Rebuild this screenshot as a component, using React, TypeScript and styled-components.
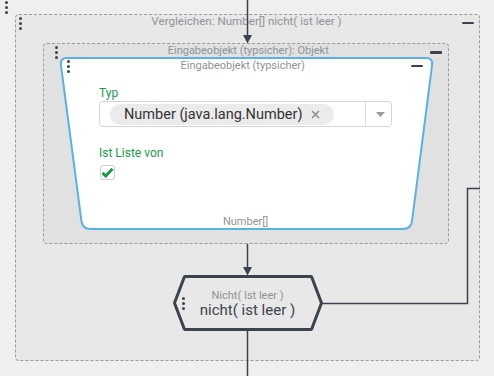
import React from "react";
import styled, { createGlobalStyle } from "styled-components";

const GlobalStyle = createGlobalStyle`
  html, body { margin: 0; padding: 0; background: #efefef; }
  body { font-family: Roboto, "Liberation Sans", Arial, sans-serif; }
  * { box-sizing: border-box; }
`;

const DARK = "#3b444d";
const GREEN = "#1b9a4b";
const MUTED = "#8f9397";

const Page = styled.div`
  position: relative;
  width: 494px;
  height: 376px;
  overflow: hidden;
  padding: 14px 0 0 15px;
`;

const TopHandle = styled.div`
  position: absolute;
  left: 4.5px;
  top: 0.5px;
`;

const DotsWrap = styled.div`
  display: flex;
  flex-direction: column;
  gap: 2px;
`;

const Dot = styled.span`
  width: 3px;
  height: 3px;
  border-radius: 50%;
  background: ${DARK};
`;

const Dots = () => (
  <DotsWrap>
    <Dot />
    <Dot />
    <Dot />
  </DotsWrap>
);

const Minus = styled.span<{ $top: number }>`
  display: block;
  width: 12.5px;
  height: 2.5px;
  border-radius: 1px;
  background: ${DARK};
  margin-top: ${(p) => p.$top}px;
`;

const Header = styled.div<{ $h: number; $pl: number; $pr: number }>`
  display: grid;
  grid-template-columns: 1fr auto 1fr;
  height: ${(p) => p.$h}px;
  padding: 0 ${(p) => p.$pr}px 0 ${(p) => p.$pl}px;
  align-items: start;
  flex: none;
  & > :first-child { justify-self: start; }
  & > :last-child { justify-self: end; }
`;

const HandleSlot = styled.div<{ $top: number }>`
  margin-top: ${(p) => p.$top}px;
`;

const Title = styled.div<{ $size?: number; $shift?: number }>`
  font-size: ${(p) => p.$size ?? 11}px;
  line-height: 13px;
  color: ${MUTED};
  white-space: nowrap;
  text-align: center;
  margin-left: ${(p) => p.$shift ?? 0}px;
`;

const Outer = styled.div`
  width: 465px;
  height: 347px;
  border: 1px dashed #9b9b9b;
  border-radius: 4px;
  background: #e8e8e8;
  display: flex;
  flex-direction: column;
`;

const Inner = styled.div`
  width: 406px;
  height: 201px;
  margin: 12px 0 0 27px;
  border: 1px dashed #9b9b9b;
  border-radius: 4px;
  background: #e1e1e1;
  display: flex;
  flex-direction: column;
`;

const Card = styled.div`
  position: relative;
  width: 375px;
  height: 173px;
  margin-left: 15px;
  padding: 2px;
  display: flex;
  flex-direction: column;
`;

const ShapeSvg = styled.svg`
  position: absolute;
  left: 0;
  top: 0;
  z-index: 0;
`;

const Layer = styled.div`
  position: relative;
  z-index: 1;
`;

const Body = styled(Layer)`
  display: flex;
  flex-direction: column;
  align-items: flex-start;
  padding: 14px 0 0 38px;
`;

const Label = styled.div<{ $mt: number }>`
  font-size: 12px;
  line-height: 14px;
  color: ${GREEN};
  margin-top: ${(p) => p.$mt}px;
`;

const Select = styled.div`
  width: 293px;
  height: 26px;
  margin-top: 1px;
  border: 1px solid #d4d4d4;
  border-radius: 4px;
  display: flex;
  align-items: center;
  background: #fff;
`;

const ChipArea = styled.div`
  flex: 1;
  padding-left: 10px;
  display: flex;
  align-items: center;
`;

const Chip = styled.div`
  height: 21px;
  border-radius: 11px;
  background: #ebebeb;
  display: flex;
  align-items: center;
  gap: 9px;
  padding: 0 14px 0 14px;
  font-size: 14.5px;
  color: #333;
  white-space: nowrap;
`;

const CaretBox = styled.div`
  width: 26px;
  height: 24px;
  border-left: 1px solid #dcdcdc;
  display: flex;
  align-items: center;
  justify-content: center;
  padding-left: 4px;
`;

const Checkbox = styled.div`
  width: 15px;
  height: 15px;
  margin: 5px 0 0 1px;
  border: 1px solid #cfcfcf;
  border-radius: 3px;
  background: #fff;
  display: flex;
  align-items: center;
  justify-content: center;
`;

const Footer = styled(Layer)`
  margin-top: auto;
  padding: 0 0 0 0;
  text-align: center;
  font-size: 11px;
  line-height: 13px;
  color: ${MUTED};
  margin-right: 2px;
`;

const Hex = styled.div`
  position: relative;
  align-self: center;
  width: 150px;
  height: 56px;
  margin-top: 31px;
  display: flex;
  align-items: center;
  justify-content: center;
`;

const HexHandle = styled(Layer)`
  position: absolute;
  left: 9.5px;
  top: 21.5px;
`;

const HexText = styled(Layer)`
  display: flex;
  flex-direction: column;
  align-items: center;
  margin-top: 1px;
`;

const HexSmall = styled.div`
  font-size: 11px;
  line-height: 13px;
  color: ${MUTED};
  white-space: nowrap;
`;

const HexBig = styled.div`
  font-size: 15px;
  line-height: 17px;
  color: ${DARK};
  white-space: nowrap;
`;

const Wires = styled.svg`
  position: absolute;
  left: 0;
  top: 0;
  pointer-events: none;
`;

type Pt = [number, number];

function roundedPath(pts: Pt[], radii: number[]): string {
  const n = pts.length;
  let d = "";
  for (let i = 0; i < n; i++) {
    const prev = pts[(i - 1 + n) % n];
    const cur = pts[i];
    const next = pts[(i + 1) % n];
    const r = radii[i];
    const v1 = [prev[0] - cur[0], prev[1] - cur[1]];
    const v2 = [next[0] - cur[0], next[1] - cur[1]];
    const l1 = Math.hypot(v1[0], v1[1]);
    const l2 = Math.hypot(v2[0], v2[1]);
    const a: Pt = [cur[0] + (v1[0] / l1) * r, cur[1] + (v1[1] / l1) * r];
    const b: Pt = [cur[0] + (v2[0] / l2) * r, cur[1] + (v2[1] / l2) * r];
    d += `${i === 0 ? "M" : "L"}${a[0].toFixed(2)},${a[1].toFixed(2)} Q${cur[0]},${cur[1]} ${b[0].toFixed(2)},${b[1].toFixed(2)} `;
  }
  return d + "Z";
}

const cardPath = roundedPath(
  [
    [1, 1],
    [374, 1],
    [352, 172],
    [23.5, 172],
  ],
  [7, 7, 8, 8]
);

const hexPath = roundedPath(
  [
    [1.5, 28],
    [11.5, 1.5],
    [138.5, 1.5],
    [148.5, 28],
    [138.5, 54.5],
    [11.5, 54.5],
  ],
  [0.5, 0.5, 0.5, 0.5, 0.5, 0.5]
);

export default function App() {
  return (
    <>
      <GlobalStyle />
      <Page>
        <TopHandle>
          <Dots />
        </TopHandle>
        <Outer>
          <Header $h={16} $pl={3} $pr={5}>
            <HandleSlot $top={1.5}>
              <Dots />
            </HandleSlot>
            <Title $size={11.6}>Vergleichen: Number[] nicht( ist leer )</Title>
            <Minus $top={6.8} />
          </Header>
          <Inner>
            <Header $h={13} $pl={10.5} $pr={6}>
              <HandleSlot $top={1.5}>
                <Dots />
              </HandleSlot>
              <Title>Eingabeobjekt (typsicher): Objekt</Title>
              <Minus $top={7} />
            </Header>
            <Card>
              <ShapeSvg width={375} height={173} viewBox="0 0 375 173">
                <path d={cardPath} fill="#ffffff" stroke="#58b2e6" strokeWidth={2} />
              </ShapeSvg>
              <Layer>
                <Header $h={13} $pl={5.5} $pr={9}>
                  <HandleSlot $top={0.5}>
                    <Dots />
                  </HandleSlot>
                  <Title $shift={-4}>Eingabeobjekt (typsicher)</Title>
                  <Minus $top={5.5} />
                </Header>
              </Layer>
              <Body>
                <Label $mt={0}>Typ</Label>
                <Select>
                  <ChipArea>
                    <Chip>
                      Number (java.lang.Number)
                      <svg width="9" height="9" viewBox="0 0 9 9">
                        <path d="M1 1 L8 8 M8 1 L1 8" stroke="#8a8a8a" strokeWidth="1.5" />
                      </svg>
                    </Chip>
                  </ChipArea>
                  <CaretBox>
                    <svg width="9" height="5" viewBox="0 0 9 5">
                      <path d="M0 0 L9 0 L4.5 5 Z" fill="#9a9a9a" />
                    </svg>
                  </CaretBox>
                </Select>
                <Label $mt={19}>Ist Liste von</Label>
                <Checkbox>
                  <svg width="13" height="11" viewBox="0 0 13 11">
                    <path
                      d="M1.5 5.8 L4.8 9 L11.5 1.8"
                      fill="none"
                      stroke={GREEN}
                      strokeWidth="3"
                      strokeLinejoin="miter"
                    />
                  </svg>
                </Checkbox>
              </Body>
              <Footer>Number[]</Footer>
            </Card>
          </Inner>
          <Hex>
            <ShapeSvg width={150} height={56} viewBox="0 0 150 56">
              <path d={hexPath} fill="#e8e8e8" stroke={DARK} strokeWidth={3} />
            </ShapeSvg>
            <HexHandle>
              <Dots />
            </HexHandle>
            <HexText>
              <HexSmall>Nicht( Ist leer )</HexSmall>
              <HexBig>nicht( ist leer )</HexBig>
            </HexText>
          </Hex>
        </Outer>
        <Wires width={494} height={376} viewBox="0 0 494 376">
          <g stroke={DARK} strokeWidth={1.5} fill="none">
            <path d="M247.5 0 V36" />
            <path d="M247.5 244 V268" />
            <path d="M247.5 331 V376" />
            <path d="M322 303.5 H467.5 V188.5 H480" />
          </g>
          <g fill={DARK}>
            <path d="M243 35 H252 L247.5 43.5 Z" />
            <path d="M243 267 H252 L247.5 275.5 Z" />
          </g>
        </Wires>
      </Page>
    </>
  );
}
